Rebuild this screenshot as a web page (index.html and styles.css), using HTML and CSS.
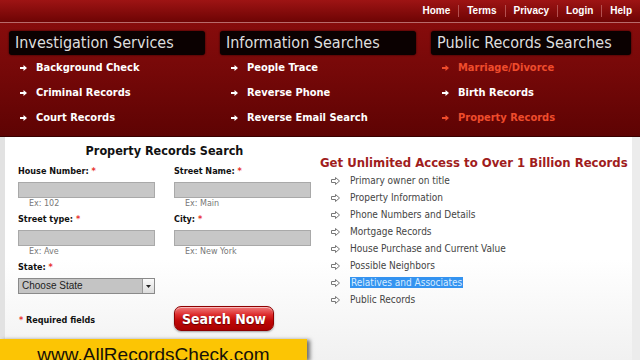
FILE: index.html
```html
<!DOCTYPE html>
<html lang="en">
<head>
<meta charset="utf-8">
<title>All Records Check - Property Records Search</title>
<link rel="stylesheet" href="styles.css">
</head>
<body>
<header class="topbar">
  <nav class="toplinks">
    <a href="#">Home</a><a href="#">Terms</a><a href="#">Privacy</a><a href="#">Login</a><a href="#">Help</a>
  </nav>
</header>

<section class="menu">
  <div class="menu-col">
    <h2 class="menu-title">Investigation Services</h2>
    <ul class="menu-list">
      <li><svg class="arr" viewBox="0 0 7 6"><path d="M0 2h3.5V0L7 3 3.5 6V4H0z"/></svg>Background Check</li>
      <li><svg class="arr" viewBox="0 0 7 6"><path d="M0 2h3.5V0L7 3 3.5 6V4H0z"/></svg>Criminal Records</li>
      <li><svg class="arr" viewBox="0 0 7 6"><path d="M0 2h3.5V0L7 3 3.5 6V4H0z"/></svg>Court Records</li>
    </ul>
  </div>
  <div class="menu-col">
    <h2 class="menu-title">Information Searches</h2>
    <ul class="menu-list">
      <li><svg class="arr" viewBox="0 0 7 6"><path d="M0 2h3.5V0L7 3 3.5 6V4H0z"/></svg>People Trace</li>
      <li><svg class="arr" viewBox="0 0 7 6"><path d="M0 2h3.5V0L7 3 3.5 6V4H0z"/></svg>Reverse Phone</li>
      <li><svg class="arr" viewBox="0 0 7 6"><path d="M0 2h3.5V0L7 3 3.5 6V4H0z"/></svg>Reverse Email Search</li>
    </ul>
  </div>
  <div class="menu-col">
    <h2 class="menu-title">Public Records Searches</h2>
    <ul class="menu-list">
      <li class="hot"><svg class="arr" viewBox="0 0 7 6"><path d="M0 2h3.5V0L7 3 3.5 6V4H0z"/></svg>Marriage/Divorce</li>
      <li><svg class="arr" viewBox="0 0 7 6"><path d="M0 2h3.5V0L7 3 3.5 6V4H0z"/></svg>Birth Records</li>
      <li class="hot"><svg class="arr" viewBox="0 0 7 6"><path d="M0 2h3.5V0L7 3 3.5 6V4H0z"/></svg>Property Records</li>
    </ul>
  </div>
</section>

<main class="content">
  <form class="search-form">
    <h1 class="form-title">Property Records Search</h1>
    <div class="fields">
      <div class="field">
        <label class="lbl">House Number: <span class="req">*</span></label>
        <input class="inp" type="text">
        <div class="ex">Ex: 102</div>
      </div>
      <div class="field">
        <label class="lbl">Street Name: <span class="req">*</span></label>
        <input class="inp" type="text">
        <div class="ex">Ex: Main</div>
      </div>
      <div class="field">
        <label class="lbl">Street type: <span class="req">*</span></label>
        <input class="inp" type="text">
        <div class="ex">Ex: Ave</div>
      </div>
      <div class="field">
        <label class="lbl">City: <span class="req">*</span></label>
        <input class="inp" type="text">
        <div class="ex">Ex: New York</div>
      </div>
      <div class="field">
        <label class="lbl">State: <span class="req">*</span></label>
        <div class="select"><span class="select-text">Choose State</span><span class="select-btn"><svg viewBox="0 0 5 3"><path d="M0 0h5L2.5 3z"/></svg></span></div>
      </div>
    </div>
    <div class="actions">
      <div class="required"><span class="req">*</span> Required fields</div>
      <button class="search-btn" type="button">Search Now</button>
    </div>
  </form>

  <section class="features">
    <h2 class="feat-title">Get Unlimited Access to Over 1 Billion Records</h2>
    <ul class="feat-list">
      <li><svg class="harr" viewBox="0 0 9 8"><path d="M0.5 2.5h4v-2l4 3.5-4 3.5v-2h-4z"/></svg>Primary owner on title</li>
      <li><svg class="harr" viewBox="0 0 9 8"><path d="M0.5 2.5h4v-2l4 3.5-4 3.5v-2h-4z"/></svg>Property Information</li>
      <li><svg class="harr" viewBox="0 0 9 8"><path d="M0.5 2.5h4v-2l4 3.5-4 3.5v-2h-4z"/></svg>Phone Numbers and Details</li>
      <li><svg class="harr" viewBox="0 0 9 8"><path d="M0.5 2.5h4v-2l4 3.5-4 3.5v-2h-4z"/></svg>Mortgage Records</li>
      <li><svg class="harr" viewBox="0 0 9 8"><path d="M0.5 2.5h4v-2l4 3.5-4 3.5v-2h-4z"/></svg>House Purchase and Current Value</li>
      <li><svg class="harr" viewBox="0 0 9 8"><path d="M0.5 2.5h4v-2l4 3.5-4 3.5v-2h-4z"/></svg>Possible Neighbors</li>
      <li><svg class="harr" viewBox="0 0 9 8"><path d="M0.5 2.5h4v-2l4 3.5-4 3.5v-2h-4z"/></svg><span class="selected">Relatives and Associates</span></li>
      <li><svg class="harr" viewBox="0 0 9 8"><path d="M0.5 2.5h4v-2l4 3.5-4 3.5v-2h-4z"/></svg>Public Records</li>
    </ul>
  </section>
</main>

<div class="banner">www.AllRecordsCheck.com</div>
</body>
</html>
```

FILE: styles.css
```css
* { box-sizing: border-box; }

html, body {
  margin: 0;
  padding: 0;
}

body {
  width: 640px;
  height: 360px;
  overflow: hidden;
  position: relative;
  display: flex;
  flex-direction: column;
  background: #fff;
  font-family: "DejaVu Sans Condensed", "DejaVu Sans", sans-serif;
}

/* ---------- top bar ---------- */
.topbar {
  height: 23px;
  flex: none;
  display: flex;
  justify-content: flex-end;
  align-items: center;
  padding: 0 8px 1px 0;
  background: linear-gradient(#9e1414, #6e0404);
  border-bottom: 1px solid #b86a6a;
}

.toplinks {
  display: flex;
  align-items: center;
}

.toplinks a {
  font: bold 10px/12px "Liberation Sans", Arial, sans-serif;
  color: #fff;
  text-decoration: none;
  padding: 0 8px;
  border-left: 1px solid #b35050;
}

.toplinks a:first-child {
  border-left: none;
  padding-left: 0;
}

.toplinks a:last-child {
  padding-right: 0;
}

/* ---------- red menu ---------- */
.menu {
  flex: none;
  height: 114px;
  display: grid;
  grid-template-columns: 196px 196px 200px;
  column-gap: 15px;
  padding: 8px 9px 0;
  background: linear-gradient(#870c0c, #5e0303);
  border-bottom: 1px solid #3a0000;
}

.menu-title {
  margin: 0;
  height: 24px;
  padding-left: 6px;
  background: #0b0101;
  border-radius: 3px;
  box-shadow: 0 0 2px #1a0000;
  font-weight: normal;
  font-size: 16px;
  line-height: 24px;
  color: #dedede;
  white-space: nowrap;
}

.menu-list {
  list-style: none;
  margin: 0;
  padding: 0 0 0 11px;
}

.menu-list li {
  height: 25px;
  display: flex;
  align-items: center;
  font-weight: bold;
  font-size: 11px;
  color: #fff;
}

.menu-list li.hot {
  color: #ef4c2c;
}

.arr {
  width: 7px;
  height: 6px;
  margin-right: 9px;
  fill: currentColor;
  flex: none;
}

/* ---------- content ---------- */
.content {
  flex: 1;
  display: grid;
  grid-template-columns: 293px 1fr;
  column-gap: 9px;
  padding: 0 1px 0 13px;
  border-left: 5px solid #e2e2e2;
  border-right: 8px solid #ececec;
  background: linear-gradient(#ffffff 55%, #f1f1f1);
}

.search-form {
  padding-top: 6px;
}

.form-title {
  margin: 0;
  font-size: 12.5px;
  line-height: 16px;
  text-align: center;
  color: #111;
}

.fields {
  margin-top: 6px;
  display: grid;
  grid-template-columns: 137px 137px;
  column-gap: 19px;
  row-gap: 4px;
}

.field {
  display: flex;
  flex-direction: column;
}

.lbl {
  font-weight: bold;
  font-size: 9px;
  line-height: 12px;
  color: #111;
  margin-bottom: 5px;
}

.req {
  color: #e8322e;
}

.inp {
  display: block;
  width: 137px;
  height: 16px;
  margin: 0;
  padding: 0;
  border: 1px solid #a9a9a9;
  background: #c7c7c7;
}

.ex {
  font-family: "DejaVu Sans", sans-serif;
  font-size: 8px;
  line-height: 10px;
  padding-top: 1px;
  color: #777;
  padding-left: 11px;
}

.select {
  width: 137px;
  height: 16px;
  display: flex;
  align-items: stretch;
  border: 1px solid #8a8a8a;
  background: #c4c4c4;
}

.select-text {
  flex: 1;
  padding-left: 3px;
  font: 10px/14px "Liberation Sans", Arial, sans-serif;
  color: #222;
}

.select-btn {
  width: 12px;
  display: flex;
  align-items: center;
  justify-content: center;
  background: linear-gradient(#fafafa, #dcdcdc);
  border-left: 1px solid #999;
}

.select-btn svg {
  width: 5px;
  height: 3px;
  fill: #222;
}

.actions {
  margin-top: 12px;
  display: grid;
  grid-template-columns: 137px 100px;
  column-gap: 19px;
  align-items: center;
}

.required {
  font-weight: bold;
  font-size: 9px;
  padding: 3px 0 0 1px;
  color: #111;
}

.search-btn {
  width: 100px;
  height: 25px;
  padding: 0;
  border: 1px solid #8e0000;
  border-radius: 7px;
  background: linear-gradient(#f07a7a 0%, #dc2a2a 35%, #c00808 60%, #a80000 100%);
  box-shadow: 0 1px 2px rgba(0, 0, 0, 0.35), inset 0 1px 0 rgba(255, 255, 255, 0.5);
  font-family: "DejaVu Sans Condensed", "DejaVu Sans", sans-serif;
  font-weight: bold;
  font-size: 14px;
  color: #fff;
  text-shadow: 0 1px 1px #600;
}

/* ---------- features ---------- */
.features {
  padding-top: 18px;
}

.feat-title {
  margin: 0;
  font-size: 13px;
  line-height: 16px;
  color: #a01d1d;
  white-space: nowrap;
}

.feat-list {
  list-style: none;
  margin: 1px 0 0;
  padding: 0 0 0 11px;
}

.feat-list li {
  height: 17px;
  display: flex;
  align-items: center;
  font-size: 10px;
  color: #444;
}

.harr {
  width: 9px;
  height: 8px;
  margin-right: 10px;
  fill: none;
  stroke: #777;
  stroke-width: 1;
  flex: none;
}

.selected {
  background: #3493f0;
  color: #d6ebff;
  padding: 0 1px;
}

/* ---------- overlay banner ---------- */
.banner {
  position: absolute;
  left: 0;
  top: 339px;
  width: 307px;
  height: 21px;
  overflow: hidden;
  padding-top: 5px;
  background: #fcc504;
  box-shadow: 3px 1px 4px rgba(0, 0, 0, 0.55);
  font: 19px/21px "Liberation Sans", Arial, sans-serif;
  color: #161208;
  text-align: center;
}
```
